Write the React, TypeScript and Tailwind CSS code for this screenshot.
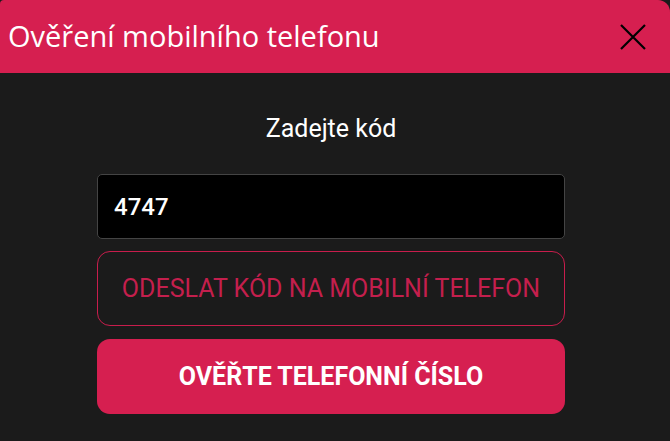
export default function App() {
  return (
    <div className="h-[441px] w-[670px] overflow-hidden bg-[#1b1b1b]">
      <div className="flex h-[73px] items-center justify-between rounded-tl-[4px] rounded-tr-[12px] bg-[#d61f50] pl-[8px] pr-[24px]">
        <h1 className="pb-[2px] font-['Open_Sans',sans-serif] text-[29px] font-medium leading-none text-white">
          Ověření mobilního telefonu
        </h1>
        <button aria-label="Zavřít" className="text-black">
          <svg width="26" height="26" viewBox="0 0 26 26" fill="none" stroke="currentColor" strokeWidth="2.2">
            <path d="M1 1L25 25M25 1L1 25" />
          </svg>
        </button>
      </div>
      <div className="flex flex-col pl-[97px] pr-[105px] font-['Roboto',sans-serif]">
        <p className="mt-[42px] text-center text-[25px] leading-[28px] text-white">Zadejte kód</p>
        <input
          defaultValue="4747"
          className="mt-[31px] h-[65px] rounded-[5px] border border-[#444] bg-black px-[16px] text-[24px] font-medium text-white outline-none"
        />
        <button className="mt-[12px] h-[75px] rounded-[13px] border border-[#c81d4c] text-[25px] text-[#c41f4d]">
          ODESLAT KÓD NA MOBILNÍ TELEFON
        </button>
        <button className="mt-[13px] h-[75px] rounded-[13px] bg-[#d61f50] text-[25px] font-bold text-white">
          OVĚŘTE TELEFONNÍ ČÍSLO
        </button>
      </div>
    </div>
  );
}
